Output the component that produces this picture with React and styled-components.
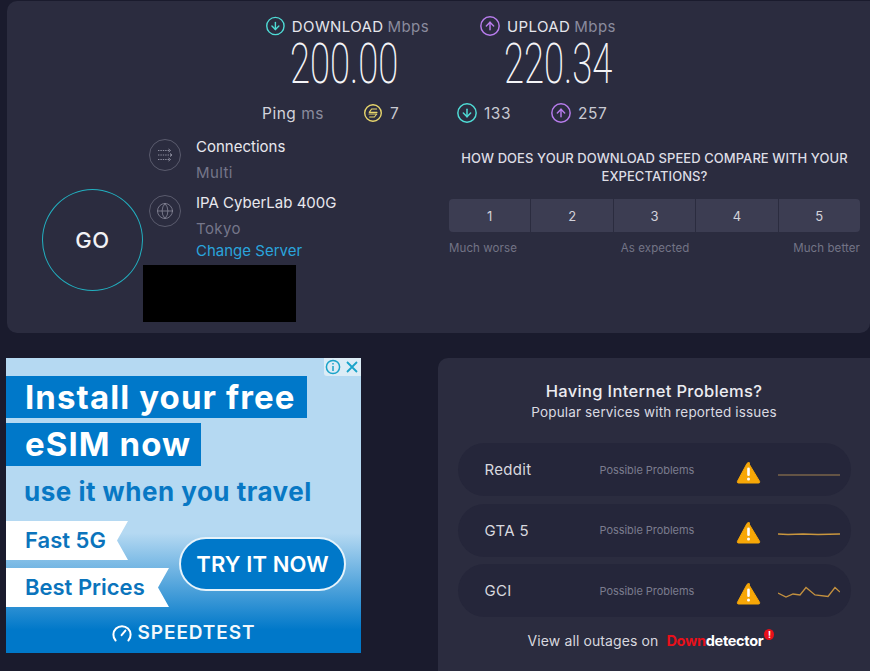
import styled, { createGlobalStyle } from 'styled-components';
import { CircleArrowDown, CircleArrowUp, Globe } from 'lucide-react';

const GlobalStyle = createGlobalStyle`
  html, body {
    margin: 0;
    height: 100%;
    background: #1a1b2d;
    overflow: hidden;
  }
  body {
    font-family: Inter, 'Noto Sans', sans-serif;
  }
`;

const services = [
  { name: 'Reddit', line: '0,17 62,17', color: '#7a654a' },
  { name: 'GTA 5', line: '0,16 10,16.5 25,16 40,16.5 62,16', color: '#c9963e' },
  {
    name: 'GCI',
    line: '0,14 8,18 15,15 22,16 28,8.5 37,16 50,17.5 57,8.5 62,13',
    color: '#c4913f',
  },
];

const PingIcon = () => (
  <svg width="22" height="22" viewBox="0 0 22 22" fill="none" stroke="#e8d66c" strokeWidth="1.4">
    <circle cx="11" cy="11" r="8.3" />
    <path d="M14.6 7H9.6L7.2 10.4H15" strokeWidth="1.1" strokeLinejoin="round" strokeLinecap="round" />
    <path d="M7 12H14.8L12.4 15H7.6" strokeWidth="1.1" strokeLinejoin="round" strokeLinecap="round" />
  </svg>
);

const ConnectionsIcon = () => (
  <svg width="16" height="14" viewBox="0 0 16 14" fill="none" stroke="#8d8e9f" strokeWidth="1">
    <path d="M1 2.5H13M1 7H14.5M1 11.5H13" strokeDasharray="1.4 1" />
    <path d="M11.5 1L13.5 2.5L11.5 4M13 5.5L15 7L13 8.5M11.5 10L13.5 11.5L11.5 13" />
  </svg>
);

const WarningIcon = () => (
  <WarningSvg width="25" height="23" viewBox="0 0 25 23">
    <path
      d="M12.5 2L23.6 20.4Q24 22 22.6 22H2.4Q1 22 1.4 20.4L11 2.4Q12.5 0.6 14 2.4Z"
      fill="#f7a707"
      stroke="#f7a707"
      strokeLinejoin="round"
    />
    <rect x="11.2" y="6.5" width="2.6" height="8.5" rx="1.3" fill="#fff" />
    <circle cx="12.5" cy="18" r="1.5" fill="#fff" />
  </WarningSvg>
);

const GaugeIcon = () => (
  <svg width="20" height="18" viewBox="0 0 20 18" fill="none" stroke="#fff" strokeWidth="2" strokeLinecap="round">
    <path d="M3.6 16.5A8.6 8.6 0 1 1 16.4 16.5" />
    <path d="M9.6 11.2L13.4 6.6" />
  </svg>
);

export default function App() {
  return (
    <Page>
      <GlobalStyle />
      <SpeedPanel>
        <SpeedRow>
          <SpeedColumn>
            <SpeedLabel>
              <CircleArrowDown size={22} color="#4fdcd6" strokeWidth={1.6} />
              <LabelName>DOWNLOAD</LabelName>
              <Unit>Mbps</Unit>
            </SpeedLabel>
            <SpeedValue>200.00</SpeedValue>
          </SpeedColumn>
          <SpeedColumn>
            <SpeedLabel>
              <CircleArrowUp size={22} color="#b77cec" strokeWidth={1.6} />
              <LabelName>UPLOAD</LabelName>
              <Unit>Mbps</Unit>
            </SpeedLabel>
            <SpeedValue>220.34</SpeedValue>
          </SpeedColumn>
        </SpeedRow>

        <PingRow>
          <PingLabel>
            Ping <PingUnit>ms</PingUnit>
          </PingLabel>
          <PingStat $width="94px">
            <PingIcon />
            7
          </PingStat>
          <PingStat $width="94px">
            <CircleArrowDown size={22} color="#4fdcd6" strokeWidth={1.6} />
            133
          </PingStat>
          <PingStat>
            <CircleArrowUp size={22} color="#b77cec" strokeWidth={1.6} />
            257
          </PingStat>
        </PingRow>

        <LowerArea>
          <GoButton>GO</GoButton>
          <ServerColumn>
            <ServerRow>
              <IconRing>
                <ConnectionsIcon />
              </IconRing>
              <ServerText>
                <ServerName>Connections</ServerName>
                <ServerDetail>Multi</ServerDetail>
              </ServerText>
            </ServerRow>
            <ServerRow>
              <IconRing>
                <Globe size={18} color="#8d8e9f" strokeWidth={1} />
              </IconRing>
              <ServerText>
                <ServerName>IPA CyberLab 400G</ServerName>
                <ServerDetail>Tokyo</ServerDetail>
                <ChangeServer>Change Server</ChangeServer>
              </ServerText>
            </ServerRow>
            <Redacted />
          </ServerColumn>
          <Survey>
            <SurveyTitle>HOW DOES YOUR DOWNLOAD SPEED COMPARE WITH YOUR EXPECTATIONS?</SurveyTitle>
            <RatingRow>
              {[1, 2, 3, 4, 5].map(n => (
                <RatingButton key={n}>{n}</RatingButton>
              ))}
            </RatingRow>
            <RatingLegend>
              <span>Much worse</span>
              <span>As expected</span>
              <span>Much better</span>
            </RatingLegend>
          </Survey>
        </LowerArea>
      </SpeedPanel>

      <BottomRow>
        <Ad>
          <AdControls>
            <AdControl>
              <svg width="16" height="16" viewBox="0 0 16 16" fill="none" stroke="#1aa3c9" strokeWidth="1.5">
                <circle cx="8" cy="8" r="6.6" />
                <path d="M8 7V12M8 4V5.6" />
              </svg>
            </AdControl>
            <AdControl>
              <svg width="16" height="16" viewBox="0 0 16 16" fill="none" stroke="#1aa3c9" strokeWidth="1.8">
                <path d="M3 3L13 13M13 3L3 13" />
              </svg>
            </AdControl>
          </AdControls>
          <AdHeadline $width="301px" $height="42px">Install your free</AdHeadline>
          <AdHeadline $width="195px" $height="43px">eSIM now</AdHeadline>
          <AdTagline>use it when you travel</AdTagline>
          <AdOffer>
            <RibbonStack>
              <Ribbon $width="122px">Fast 5G</Ribbon>
              <Ribbon $width="163px">Best Prices</Ribbon>
            </RibbonStack>
            <TryButton>TRY IT NOW</TryButton>
          </AdOffer>
          <AdLogo>
            <GaugeIcon />
            <AdLogoText>SPEEDTEST</AdLogoText>
          </AdLogo>
        </Ad>

        <ProblemsPanel>
          <ProblemsTitle>Having Internet Problems?</ProblemsTitle>
          <ProblemsSubtitle>Popular services with reported issues</ProblemsSubtitle>
          <ServiceList>
            {services.map(service => (
              <ServiceRow key={service.name}>
                <ServiceName>{service.name}</ServiceName>
                <ServiceStatus>Possible Problems</ServiceStatus>
                <WarningIcon />
                <Spark width="62" height="24" viewBox="0 0 62 24" fill="none">
                  <polyline points={service.line} stroke={service.color} strokeWidth="1.3" />
                </Spark>
              </ServiceRow>
            ))}
          </ServiceList>
          <OutagesLine>
            View all outages on
            <DetectorLogo>
              <DetectorRed>Down</DetectorRed>detector
              <DetectorBadge>!</DetectorBadge>
            </DetectorLogo>
          </OutagesLine>
        </ProblemsPanel>
      </BottomRow>
    </Page>
  );
}

const Page = styled.div`
  width: 870px;
  height: 671px;
  padding: 1px 0 0 6px;
  box-sizing: border-box;
  overflow: hidden;
`;

const SpeedPanel = styled.section`
  margin-left: 1px;
  width: 863px;
  height: 332px;
  box-sizing: border-box;
  padding-top: 15px;
  background: #2b2c3f;
  border-radius: 10px 0 10px 10px;
  color: #e6e6ec;
`;

const SpeedRow = styled.div`
  display: flex;
  gap: 50px;
  padding-left: 258px;
`;

const SpeedColumn = styled.div`
  display: flex;
  flex-direction: column;
  width: 164px;
`;

const SpeedLabel = styled.div`
  display: flex;
  align-items: center;
  height: 20px;
  font-size: 15px;
  letter-spacing: 0.4px;
  white-space: nowrap;
`;

const LabelName = styled.span`
  margin-left: 6px;
`;

const Unit = styled.span`
  margin-left: 4px;
  color: #8a8b9d;
`;

const SpeedValue = styled.div`
  align-self: flex-start;
  margin: 1px 0 0 25px;
  height: 54px;
  font-family: Roboto, sans-serif;
  font-weight: 200;
  font-size: 56px;
  line-height: 54px;
  color: #f4f4f7;
  transform: scaleX(0.65);
  transform-origin: left center;
  white-space: nowrap;
`;

const PingRow = styled.div`
  display: flex;
  align-items: center;
  height: 20px;
  margin-top: 12px;
  padding-left: 255px;
  font-size: 15.5px;
  letter-spacing: 0.5px;
`;

const PingLabel = styled.div`
  width: 100px;
  color: #d4d4dc;
`;

const PingUnit = styled.span`
  color: #8a8b9d;
`;

const PingStat = styled.div`
  display: flex;
  align-items: center;
  gap: 6px;
  width: ${props => props.$width || 'auto'};
  color: #c9c9d2;
`;

const LowerArea = styled.div`
  display: flex;
  margin-top: 15px;
`;

const GoButton = styled.button`
  flex: none;
  width: 101px;
  height: 102px;
  margin: 51px 0 0 35px;
  padding: 0;
  background: transparent;
  border: 1.5px solid #22b0c0;
  border-radius: 50%;
  font: 500 22px Inter, sans-serif;
  letter-spacing: 0.5px;
  color: #f2f2f5;
`;

const ServerColumn = styled.div`
  flex: none;
  display: flex;
  flex-direction: column;
  width: 306px;
`;

const ServerRow = styled.div`
  display: flex;
  gap: 15px;
  padding-left: 6px;
  margin-bottom: 12px;
`;

const IconRing = styled.div`
  flex: none;
  display: flex;
  align-items: center;
  justify-content: center;
  width: 30px;
  height: 30px;
  margin-top: 1px;
  border: 1px solid #5a5b6d;
  border-radius: 50%;
`;

const ServerText = styled.div`
  display: flex;
  flex-direction: column;
`;

const ServerName = styled.div`
  font-size: 15px;
  font-weight: 400;
  line-height: 18px;
  color: #e8e8ee;
`;

const ServerDetail = styled.div`
  margin-top: 8px;
  font-size: 15px;
  line-height: 18px;
  letter-spacing: 0.4px;
  color: #75768a;
`;

const ChangeServer = styled.a`
  margin-top: 4px;
  font-size: 15px;
  line-height: 18px;
  color: #2aa4dc;
`;

const Redacted = styled.div`
  width: 153px;
  height: 57px;
  margin-top: -7px;
  background: #000;
`;

const Survey = styled.div`
  flex: none;
  width: 411px;
  margin-top: 11px;
`;

const SurveyTitle = styled.h2`
  margin: 0;
  font-size: 13px;
  font-weight: 500;
  line-height: 18px;
  letter-spacing: 0.06px;
  text-align: center;
  color: #dedee5;
`;

const RatingRow = styled.div`
  display: grid;
  grid-template-columns: repeat(5, 1fr);
  gap: 1px;
  margin-top: 14px;
  border-radius: 4px;
  overflow: hidden;
`;

const RatingButton = styled.button`
  height: 33px;
  padding: 0;
  border: 0;
  background: #3c3d52;
  font: 400 13px Inter, sans-serif;
  color: #d2d2da;
`;

const RatingLegend = styled.div`
  display: flex;
  justify-content: space-between;
  margin-top: 9px;
  font-size: 11.5px;
  letter-spacing: 0.1px;
  color: #737486;
`;

const BottomRow = styled.div`
  display: flex;
  align-items: flex-start;
  gap: 77px;
  margin-top: 25px;
`;

const Ad = styled.aside`
  position: relative;
  flex: none;
  width: 355px;
  height: 295px;
  padding-top: 18px;
  box-sizing: border-box;
  background: linear-gradient(#b5d9f2 0, #b5d9f2 175px, #0078c9 272px);
  font-family: Inter, sans-serif;
`;

const AdControls = styled.div`
  position: absolute;
  top: 0;
  right: 0;
  display: flex;
  background: #dcecf6;
  border-radius: 0 0 0 3px;
`;

const AdControl = styled.span`
  display: flex;
  align-items: center;
  justify-content: center;
  width: 18.5px;
  height: 18px;
`;

const AdHeadline = styled.div`
  width: ${props => props.$width};
  height: ${props => props.$height};
  margin-bottom: 5px;
  padding-left: 19px;
  box-sizing: border-box;
  background: #0078c9;
  font-size: 33px;
  font-weight: 700;
  line-height: ${props => props.$height};
  letter-spacing: 1.1px;
  color: #fff;
  white-space: nowrap;
`;

const AdTagline = styled.div`
  margin-top: 11px;
  padding-left: 18px;
  font-size: 26px;
  font-weight: 700;
  line-height: 30px;
  letter-spacing: 0.5px;
  color: #0878c4;
  white-space: nowrap;
`;

const AdOffer = styled.div`
  display: flex;
  align-items: center;
  margin-top: 14px;
`;

const RibbonStack = styled.div`
  display: flex;
  flex-direction: column;
  gap: 8px;
  width: 173px;
`;

const Ribbon = styled.div`
  width: ${props => props.$width};
  height: 39px;
  padding-left: 19px;
  box-sizing: border-box;
  background: #fff;
  clip-path: polygon(0 0, 100% 0, calc(100% - 11px) 50%, 100% 100%, 0 100%);
  font-size: 22px;
  font-weight: 600;
  line-height: 38px;
  color: #0b74bc;
`;

const TryButton = styled.div`
  display: flex;
  align-items: center;
  justify-content: center;
  width: 167px;
  height: 54px;
  box-sizing: border-box;
  border: 2px solid #e6f3fb;
  border-radius: 27px;
  background: #0078c9;
  font-size: 22px;
  font-weight: 600;
  letter-spacing: 0.1px;
  color: #fff;
  white-space: nowrap;
`;

const AdLogo = styled.div`
  display: flex;
  align-items: center;
  justify-content: center;
  gap: 6px;
  margin-top: 14px;
`;

const AdLogoText = styled.span`
  font-size: 19px;
  font-weight: 600;
  letter-spacing: 0.9px;
  color: #f2f8fc;
`;

const ProblemsPanel = styled.section`
  flex: none;
  display: flex;
  flex-direction: column;
  align-items: center;
  width: 432px;
  height: 330px;
  box-sizing: border-box;
  padding-top: 23px;
  background: #2b2c3f;
  border-radius: 10px 0 0 10px;
`;

const ProblemsTitle = styled.h2`
  margin: 0;
  font-size: 16.5px;
  font-weight: 500;
  line-height: 20px;
  letter-spacing: 0.33px;
  color: #ececf1;
`;

const ProblemsSubtitle = styled.p`
  margin: 1px 0 0;
  font-size: 13.5px;
  line-height: 20px;
  letter-spacing: 0.15px;
  color: #dadae1;
`;

const ServiceList = styled.div`
  display: flex;
  flex-direction: column;
  gap: 7.5px;
  width: 393px;
  margin-top: 21px;
`;

const ServiceRow = styled.div`
  display: flex;
  align-items: center;
  height: 53px;
  padding-left: 27px;
  box-sizing: border-box;
  background: #25263a;
  border-radius: 27px;
`;

const ServiceName = styled.div`
  width: 115px;
  font-size: 15px;
  letter-spacing: 0.3px;
  color: #d8d8df;
`;

const ServiceStatus = styled.div`
  width: 136px;
  font-size: 11px;
  letter-spacing: -0.05px;
  color: #7b7c8e;
`;

const WarningSvg = styled.svg`
  margin-top: 5px;
`;

const Spark = styled.svg`
  margin-left: 17px;
`;

const OutagesLine = styled.div`
  display: flex;
  align-items: center;
  gap: 8px;
  margin-top: 15px;
  font-size: 14px;
  letter-spacing: 0.1px;
  color: #d8d8df;
`;

const DetectorLogo = styled.span`
  position: relative;
  padding-right: 17px;
  font-size: 14.5px;
  font-weight: 700;
  letter-spacing: -0.3px;
  color: #fff;
`;

const DetectorRed = styled.span`
  color: #e8101a;
`;

const DetectorBadge = styled.span`
  position: absolute;
  top: -3px;
  right: 6px;
  width: 10px;
  height: 11px;
  border-radius: 50%;
  background: #e8101a;
  font-size: 9px;
  line-height: 11px;
  text-align: center;
  color: #fff;
`;
